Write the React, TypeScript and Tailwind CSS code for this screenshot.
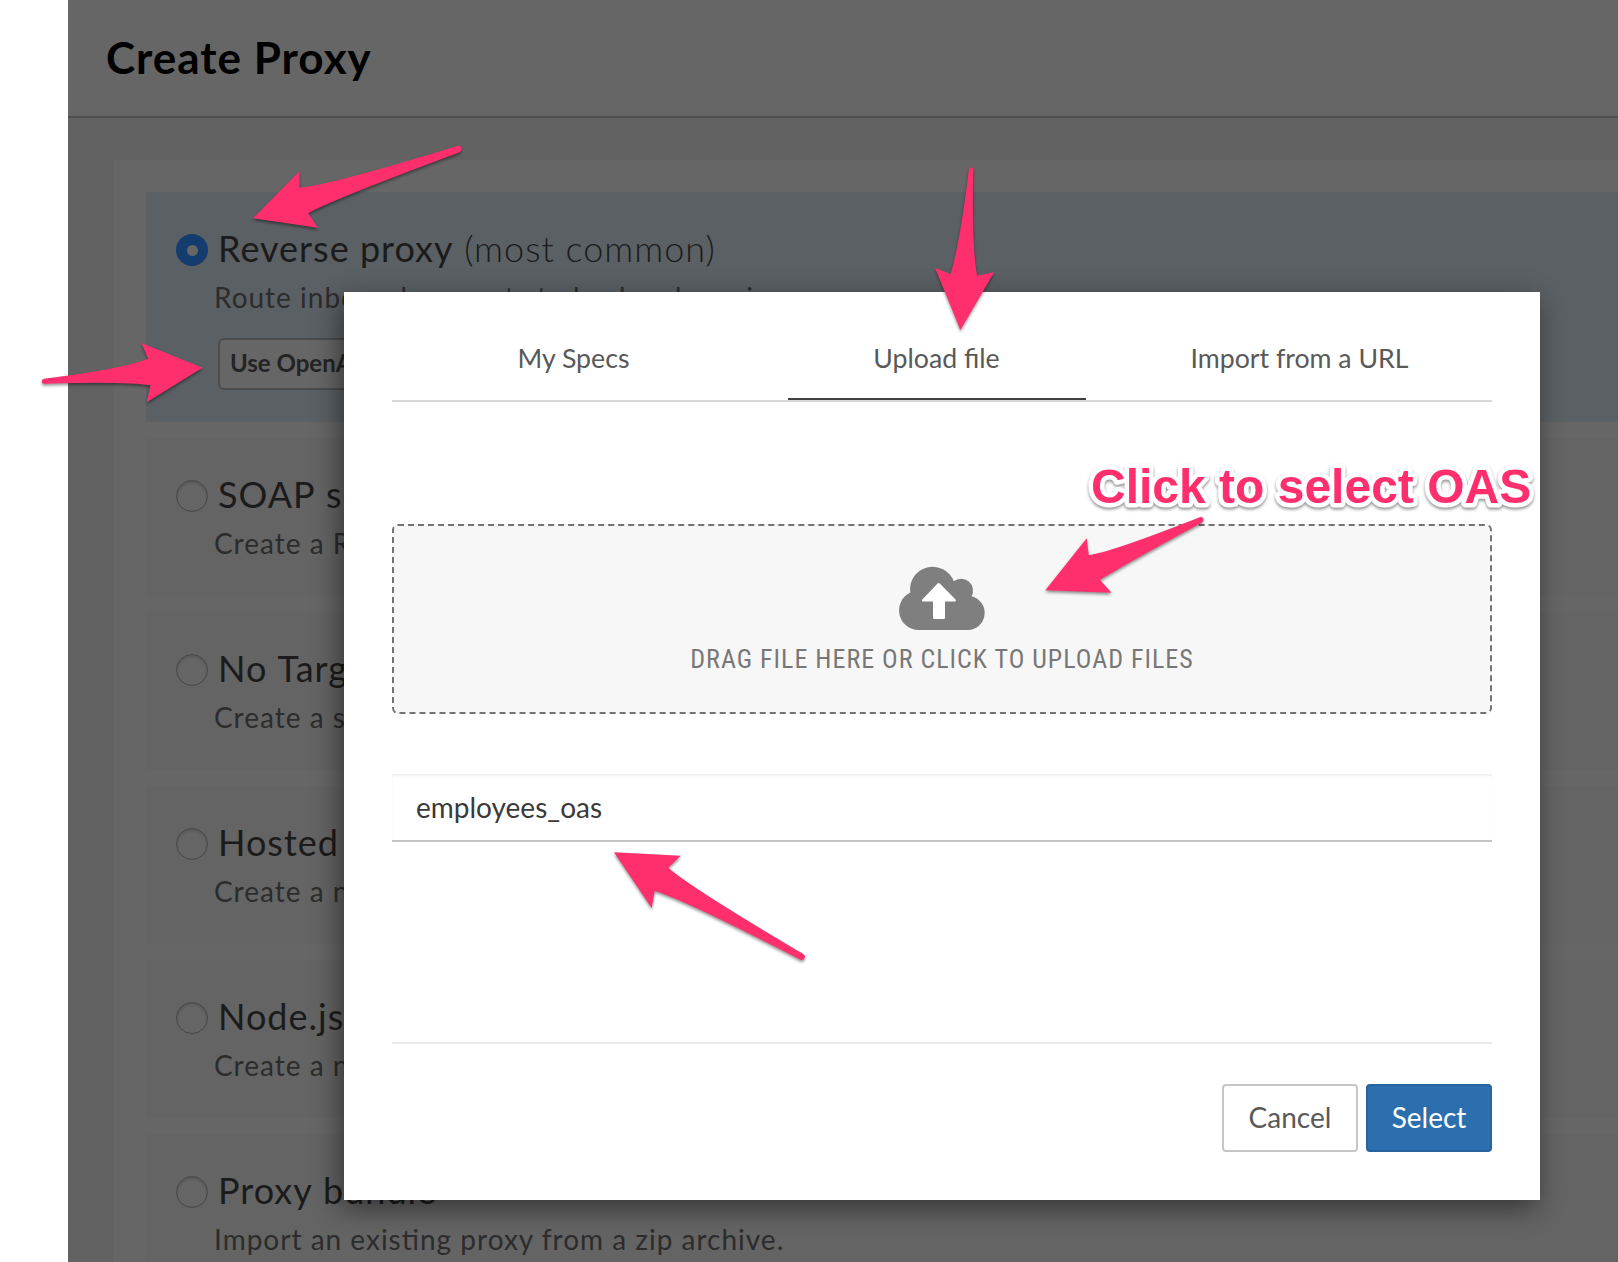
import React from "react";

type Option = { title: string; note?: string; description: string; selected?: boolean; action?: string };

const options: Option[] = [
  {
    title: "Reverse proxy",
    note: "(most common)",
    description: "Route inbound requests to backend services.",
    selected: true,
    action: "Use OpenAPI",
  },
  { title: "SOAP service", description: "Create a RESTful or pass-through proxy." },
  { title: "No Target", description: "Create a simple API proxy." },
  { title: "Hosted Targets", description: "Create a new hosted target." },
  { title: "Node.js App", description: "Create a new Node.js app." },
  { title: "Proxy bundle", description: "Import an existing proxy from a zip archive." },
];

function Radio({ selected }: { selected?: boolean }) {
  return selected ? (
    <span className="mt-1 flex size-8 shrink-0 items-center justify-center rounded-full bg-[#153c6e]">
      <span className="size-[11px] rounded-full bg-[#666666]" />
    </span>
  ) : (
    <span className="mt-1 size-8 shrink-0 rounded-full border border-[#484848] bg-[#666666] shadow-[inset_0_2px_3px_rgba(0,0,0,0.15)]" />
  );
}

function OptionCard({ option }: { option: Option }) {
  return (
    <div
      className={
        option.selected
          ? "h-[230px] bg-[#5b6064] pt-[34px] pl-[30px]"
          : "h-[158px] bg-[#646464] pt-[34px] pl-[30px]"
      }
    >
      <div className="flex h-11 items-center">
        <Radio selected={option.selected} />
        <h2
          className={
            option.note
              ? "ml-[10px] text-[36px] leading-[44px] tracking-[1px] whitespace-nowrap text-[#1b1b1b]"
              : "ml-[10px] text-[36px] leading-[44px] tracking-[1px] whitespace-nowrap text-[#1b1b1b] [word-spacing:1px]"
          }
        >
          {option.title}
          {option.note && <span className="font-light"> {option.note}</span>}
        </h2>
      </div>
      <p className="mt-[10px] ml-[38px] text-[28px] leading-[34px] tracking-[1px] whitespace-nowrap text-[#2c2c2c] [font-feature-settings:'liga']">
        {option.description}
      </p>
      {option.action && (
        <button className="mt-6 ml-[42px] flex h-[52px] items-center rounded-md border-2 border-[#4b4b4b] bg-[#666666] px-[10px] pb-[2px] text-2xl font-bold whitespace-nowrap text-[#242424]">
          {option.action}
        </button>
      )}
    </div>
  );
}

function CloudUpload() {
  return (
    <svg width="86" height="63" viewBox="0 0 86 63" className="block overflow-visible">
      <path
        fill="#7f7f7f"
        d="M19.300 63A19.650 19.650 0 0 1 11.300 25.600A22.600 22.600 0 0 1 54.800 14.300A11.900 11.900 0 0 1 72.600 29.300A17.100 17.100 0 0 1 69 63Z"
      />
      <path
        fill="#fff"
        d="M38.600 16.600Q39.700 15.400 40.800 16.600L56.500 32.600Q57.500 34.600 55.500 34.600H46V50.700Q46 52 44.700 52H35.300Q34 52 34 50.700V34.600H24.300Q22.300 34.600 23.300 32.600Z"
      />
    </svg>
  );
}

function Annotations() {
  return (
    <svg
      width="1618"
      height="1262"
      viewBox="0 0 1618 1262"
      fill="#ff2f6e"
      className="pointer-events-none absolute top-0 left-0 drop-shadow-[0_2px_1.5px_rgba(0,0,0,0.42)]"
    >
      <path d="M253.100 218.300L299.600 171V187.700Q330 185 457.500 145.900Q461 145.500 461.500 148.500Q461.500 151.300 459 152.500Q331 200 308.200 213.300L317.800 227.700Z" />
      <path d="M202.500 367.700L141.500 343L148.100 358.700Q125 368.500 44 378.700Q41.500 379.200 41.700 381.500Q41.900 383.900 44.500 383.700Q126 381 150.500 385.300L146.700 402.300Z" />
      <path d="M960.400 330L935.100 268L950.600 274Q960 243 968.900 169.500Q969.200 167.500 971 167.500Q973.200 167.500 973.200 169.800Q971.500 245 977.100 275.700L994.300 272Z" />
      <path d="M1045.300 590.300L1086.700 538.300L1088.700 555Q1109 553 1199.800 517.200Q1202.600 516.600 1203.500 518.800Q1204 521.500 1201.500 522.800Q1115 570 1100.100 580L1111.500 592.700Z" />
      <path d="M614 852.300L680.700 855.700L668.300 867.700Q690 887 803.300 954Q805.600 955.500 804.800 957.800Q803.500 960.700 800.500 959.800Q685 900 654.700 891L651.700 908Z" />
      <text
        x="1091"
        y="503"
        stroke="#ffffff"
        strokeWidth="9"
        strokeLinejoin="round"
        className="font-['Liberation_Sans',sans-serif] text-[48px] font-bold [paint-order:stroke_fill]"
      >
        Click to select OAS
      </text>
    </svg>
  );
}

function UploadDialog() {
  return (
    <div className="absolute top-[292px] left-[344px] h-[908px] w-[1196px] bg-white px-12 shadow-[-4px_8px_26px_rgba(0,0,0,0.48)]">
      <div className="flex h-[110px] border-b-2 border-[#d8d8d8] text-[26.700px] leading-[32px] text-[#595959]">
        <div className="w-[363px] pt-[50px] text-center">My Specs</div>
        <div className="flex w-[363px] flex-col items-center pt-[50px]">
          Upload file
          <span className="mt-6 h-[2px] w-[298px] bg-[#404040]" />
        </div>
        <div className="w-[363px] pt-[50px] text-center">Import from a URL</div>
      </div>

      <div className="mt-[122px] flex h-[190px] flex-col items-center rounded-md border-2 border-dashed border-[#737373] bg-[#f7f7f7] pt-[41px]">
        <CloudUpload />
        <span className="mt-[13px] font-['Roboto_Condensed','Roboto',sans-serif] text-[26px] leading-[32px] tracking-[1px] whitespace-nowrap text-[#777777] [font-stretch:75%]">
          DRAG FILE HERE OR CLICK TO UPLOAD FILES
        </span>
      </div>

      <input
        className="mt-[60px] block h-[68px] w-full border-b-2 border-[#c4c4c4] px-6 text-[28px] text-[#3a3a3a] shadow-[inset_0_2px_2px_rgba(0,0,0,0.06)] outline-none"
        defaultValue="employees_oas"
      />

      <div className="mt-[200px] flex justify-end gap-2 border-t-2 border-[#e8e8e8] pt-10 text-[28px]">
        <button className="h-[68px] w-[136px] rounded border-2 border-[#c6c6c6] bg-white pb-[2px] text-[#595959]">
          Cancel
        </button>
        <button className="h-[68px] w-[126px] rounded border-2 border-[#27639f] bg-[#2b6fae] pb-[2px] text-white">
          Select
        </button>
      </div>
    </div>
  );
}

export default function App() {
  return (
    <div className="relative flex h-[1262px] w-[1618px] overflow-hidden bg-white pl-[68px] font-['Lato',sans-serif]">
      <main className="w-full bg-[#626262]">
        <header className="h-[118px] border-b-2 border-[#4e4e4e] bg-[#666666] pt-[31px] pl-[38px]">
          <h1 className="text-[44px] leading-[52px] font-bold tracking-[1px] text-black">Create Proxy</h1>
        </header>
        <section className="mt-[42px] ml-[46px] flex flex-col gap-4 bg-[#666666] pt-8 pl-8">
          {options.map((option) => (
            <OptionCard key={option.title} option={option} />
          ))}
        </section>
      </main>

      <UploadDialog />
      <Annotations />
    </div>
  );
}
